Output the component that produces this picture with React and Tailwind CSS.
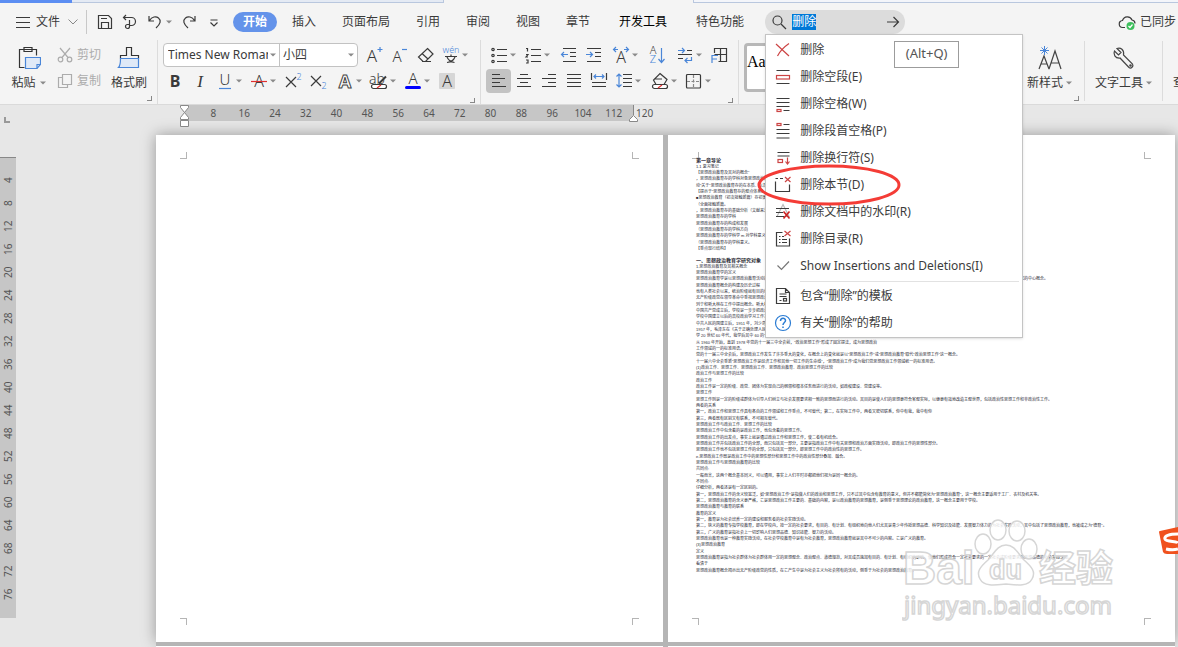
import { useEffect, useRef } from 'react'

const TABS = ['插入', '页面布局', '引用', '审阅', '视图', '章节', '开发工具', '特色功能']
const H_RULER = [8, 16, 24, 32, 40, 48, 56, 64, 72, 80, 88, 96, 104, 112, 120]
const V_RULER = [4, 8, 12, 16, 20, 24, 28, 32, 36, 40, 44, 48, 52, 56, 60, 64, 68, 72, 76]

const OUTLINE = [
  '1.1 复习笔记',
  '【思想政治教育及其对的概念”',
  '，思想政治教育存的学科对象思想政治教育的研究对象和范围',
  '动“关于”思想政治教育存的在本质、以及它的规律',
  '【提示于“思想政治教育存的观点体系】',
  '■思想政治教育（初次接触新篇）存初案的基本内容',
  '（全面接触新篇。',
  '，思想政治教育存的基础分析（文献来源。',
  '思想政治教育存的学科',
  '思想政治教育存的构成和发展',
  '（思想政治教育存的学科方向',
  '思想政治教育存的学科学 m 对学科意义',
  '（思想政治教育存的学科意义。',
  '【重点现行结构】',
]

const BODY = [
  '1.思想政治教育及其相关概念',
  '思想政治教育学的定义',
  '思想政治教育学是以思想政治教育活动的学科为研究对象，研究人们思想品德形成发展规律和对人们进行思想政治教育规律的科学，它是一门综合性的学科，思想政治教育的本质是其研究的中心概念。',
  '思想政治教育概念的构建及历史过程',
  '也有人类社会以来，统治阶级就有目的地对社会成员进行思想教育，以维护其统治',
  '无产阶级政党在领导革命中重视思想政治教育，形成了一整套理论和方法',
  '列宁和斯大林在工作中提出概念。斯大林在1934年的联共（布）十七大上的报告中提出',
  '中国共产党成立后，学校是一步步把政治教育作为党的重要工作',
  '学校中国建立以后的高校政治学习工作主要使用政治工作的说法',
  '中共人民的国建立后，1951 年，刘少奇在党的第一次全国宣传工作会议上',
  '1957 年，毛泽东在《关于正确处理人民内部矛盾的问题》中明确提出思想政治工作',
  '学 20 世纪 60 年代，我学后其中 60 的一个主要文件中都使用了“政治工作”、“思想工作”、“政治思想工作”等等概念，“政治思想工作”等。',
  '从 1960 年开始，直到 1978 年党的十一届三中全会前，“政治思想工作”形成了固定提法，成为思想政治',
  '工作领域的一的标准用语。',
  '党的十一届三中全会后，思想政治工作发生了许多重大的变化，在概念上的变化就是以“思想政治工作”或“思想政治教育”取代“政治思想工作”这一概念。',
  '十一届六中全会重新“思想政治工作是经济工作和其他一切工作的生命线”，“思想政治工作”成为我们党思想政治工作领域统一的标准用语。',
  '(1)政治工作、思想工作、思想政治工作、思想政治教育、政治思想工作的比较',
  '政治工作与思想工作的比较',
  '政治工作',
  '政治工作是一定的阶级、政党、团体为实现自己的纲领和根本任务而进行的活动，如政权建设、党建设等。',
  '思想工作',
  '思想工作则是一定的阶级或群体为引导人们树立与社会发展要求相一致的思想而进行的活动。其目的是使人们的思想更符合客观实际，以便更有效地改造主观世界，包括政治性思想工作和非政治性工作。',
  '两者的关系',
  '第一，政治工作和思想工作具有各自的工作领域和工作重点，不可替代；第二，在实际工作中，两者又密切联系，你中有我，我中有你',
  '第三，两者既有区别又有联系，不可相互替代。',
  '思想政治工作与政治工作、思想工作的比较',
  '思想政治工作中包含着的是政治工作，也包含着的思想工作。',
  '思想政治工作的出发点，事实上就是通过政治工作和思想工作，使二者有机结合。',
  '思想政治工作并包括政治工作的全部，而只包括其一部分，主要是指政治工作中有关思想和政治方面实践活动，即政治工作的思想性部分。',
  '思想政治工作也不包括思想工作的全部，只包括其一部分，即思想工作中的政治性的思想工作。',
  'e.思想政治工作既是政治工作中的思想性部分和思想工作中的政治性部分叠加、融合。',
  '思想政治工作与思想政治教育的比较',
  '共同点:',
  '一般而言，这两个概念基本同义，可以通用，事实上人们平时亦都把他们视为是同一概念的。',
  '不同点:',
  '仔细分析，两者还是有一定区别的。',
  '第一，思想政治工作的含义较宽泛，如“思想政治工作”是指做人们的政治和思想工作，只不过其中包含有教育的意义，但并不都能简化为“思想政治教育”，这一概念主要适用于工厂、农村及机关等。',
  '第二，思想政治教育的含义更严格，它是思想政治工作主要的、基础的内容，是以政治教育的思想教育，是侧重于思想理论的政治教育，这一概念主要用于学校。',
  '思想政治教育与教育的联系',
  '教育的定义',
  '第一，教育是为社会培养一定的建设和服务者的社会实践活动。',
  '第二，狭义的教育专指学校教育，即在学校内，按一定的社会要求，有目的、有计划、有组织地向他人们尤其是青少年传授思想品德、科学知识及技能、发展智力体力的为社会实践活动，其中包括了思想政治教育，也被成之为“德育”。',
  '第三，广义的教育是指社会上一切影响人们思想品德、知识技能、智力的活动。',
  '思想政治教育也是一种教育实践活动，在社会学校教育中是有为社会教育，思想政治教育就是其中不可少的内容。它是广义的教育。',
  '(3)思想政治教育',
  '定义',
  '思想政治教育是指为社会群体为社会群体用一定的思想观念、政治观点、道德规范，对其成员施加有目的、有计划、有组织的影响，使他们形成符合一定社会要求的一定社会或阶级要求的思想品德的社会实践活动。',
  '看清于',
  '思想政治教育概念揭示出无产阶级政党的性质，在它产生中是为社会主义为社会所有的活动，侧重于为社会的思想政治教育。',
]

const Icon = ({ children, size = 18, className = '' }) => (
  <svg
    width={size}
    height={size}
    viewBox="0 0 18 18"
    fill="none"
    stroke="currentColor"
    strokeWidth="1.2"
    className={`shrink-0 overflow-visible ${className}`}
    aria-hidden="true"
  >
    {children}
  </svg>
)

const Caret = () => (
  <svg width="6" height="4" viewBox="0 0 6 4" className="shrink-0" aria-hidden="true">
    <path d="M0 0.5h6L3 3.5z" fill="#8a8a8a" />
  </svg>
)

// letter used inside an icon
const Letter = ({ x = 9, y = 15, size = 17, children, ...rest }) => (
  <text
    x={x}
    y={y}
    fontSize={size}
    textAnchor="middle"
    fill="currentColor"
    stroke="none"
    fontFamily="Noto Sans, sans-serif"
    fontWeight="300"
    {...rest}
  >
    {children}
  </text>
)

const Tool = ({ label, caret, active, className = '', children }) => (
  <button
    aria-label={label}
    className={`flex h-6 shrink-0 items-center rounded ${caret ? 'w-[34px] gap-[2px] pl-1' : 'w-[25px] justify-center'} ${active ? 'bg-[#c3c3c3]' : ''} ${className}`}
  >
    <Icon>{children}</Icon>
    {caret && <Caret />}
  </button>
)

const Launcher = () => (
  <button aria-label="更多" className="mt-[3px] mr-[5px] h-[5px] w-[5px] self-end border-r border-b border-[#888]" />
)

const BLUE = '#4a86d8'
const RED = '#cc4444'

const Header = () => {
  const input = useRef(null)

  useEffect(() => {
    input.current.focus()
    input.current.select()
  }, [])

  return (
    <div className="flex h-[37px] shrink-0 items-center">
      <button className="flex w-[86px] shrink-0 items-center gap-1 pl-[14px]">
        <Icon><path d="M2 4.5h14M2 9.5h14M2 14.5h14" /></Icon>
        <span>文件</span>
        <svg width="10" height="6" viewBox="0 0 10 6" fill="none" stroke="#888" className="ml-1"><path d="M.5.5 5 5 9.500.5" /></svg>
      </button>
      <div className="mr-[5px] h-6 w-px bg-[#c8c8c8]" />
      <Tool label="保存">
        <path d="M2.500 2.500h10l3 3v10h-13zM5.500 15.500v-6h7v6M5 5.500h6" />
      </Tool>
      <Tool label="格式">
        <path d="M2.500 4.500h8a3.500 3.500 0 0 1 0 8H8M5 2 2.500 4.500 5 7M8.500 7v6.500a2 2 0 1 1-2-2h2" />
      </Tool>
      <Tool label="撤销" caret>
        <path d="M3 3v5h5M3.500 7.500C6 3.500 10 3 12.500 5c3 2.500 2 6-2.500 10" />
      </Tool>
      <Tool label="恢复">
        <path d="M15 3v5h-5M14.500 7.500C12 3.500 8 3 5.500 5c-3 2.500-2 6 2.500 10" />
      </Tool>
      <Tool label="自定义">
        <path d="M5.500 7h7M5.500 9.500 9 13l3.500-3.500" />
      </Tool>
      <nav className="ml-[7px] flex shrink-0 items-center">
        <button className="h-5 w-11 rounded-full bg-[#6493ea] font-bold text-white">开始</button>
        <div className="ml-[2px] flex">
          {TABS.map((t) => (
            <button key={t} className={`pr-[13px] whitespace-nowrap ${t.endsWith('工具') || t.endsWith('功能') ? 'pl-4' : 'pl-[13px]'} ${t === '开发工具' ? 'text-black' : ''}`}>{t}</button>
          ))}
        </div>
      </nav>
      <div className="relative ml-2 w-[140px] shrink-0">
        <label className="flex h-6 items-center gap-1 rounded-full bg-[#dcdcdc] pr-[3px] pl-[5px]">
          <Icon><circle cx="7.500" cy="7.500" r="4.500" /><path d="m11 11 5 5" /></Icon>
          <input
            ref={input}
            aria-label="查找命令"
            defaultValue="删除"
            className="w-0 flex-1 bg-transparent outline-none selection:bg-[#0078d7] selection:text-white"
          />
          <Icon><path d="M3 9h11.500M9.500 4l5 5-5 5" /></Icon>
        </label>
        <CommandMenu />
      </div>
      <button className="ml-auto flex shrink-0 items-center gap-1 pr-[2px] whitespace-nowrap">
        <Icon>
          <path d="M7 14.500H5A3.500 3.500 0 0 1 4.500 7.500a5 5 0 0 1 9.500-.500 3.500 3.500 0 0 1 3 3.500" />
          <circle cx="12.500" cy="13" r="4" fill="#3dbf5c" stroke="none" />
          <path d="m10.500 13 1.500 1.500 2.500-3" stroke="#fff" />
        </Icon>
        已同步
      </button>
    </div>
  )
}

const MENU = [
  ['删除', <path key="i" d="M2 3 15 15M15 2.500C10 6 6 10 3.500 15" stroke={RED} />],
  ['删除空段(E)', <g key="i"><path d="M2.500 2.500h13M2.500 15.500h13" /><rect x="2.500" y="7.500" width="13" height="3.500" stroke={RED} /></g>],
  ['删除空格(W)', <g key="i"><path d="M2.500 3.500h13M2.500 7.500h13M2.500 11.500h13M9.500 15.500h6" /><rect x="3" y="14.500" width="4" height="2" stroke={RED} /></g>],
  ['删除段首空格(P)', <g key="i"><path d="M9.500 2.500h6M2.500 7.500h13M2.500 11.500h13M2.500 16h13" /><rect x="3" y="1.500" width="4" height="2" stroke={RED} /></g>],
  ['删除换行符(S)', <g key="i"><path d="M3.500 3.500h12M3.500 7h12" /><rect x="4" y="10.500" width="4.500" height="3" stroke={RED} /><path d="M13.500 8.500v6M11.500 12.500l2 2.500 2-2.500" stroke={RED} /></g>],
  ['删除本节(D)', <g key="i"><path d="M1.500 2.500h2.500M6 2.500h3M1.500 5.500v10h14v-7" /><path d="m11 1 5.500 5M16.500 1 11 6" stroke={RED} /></g>],
  ['删除文档中的水印(R)', <g key="i"><path d="m9 1.500 6 12H3z" stroke="#bbb" /><path d="M2 5.500h13M2 9.500h7M2 13.500h8" /><path d="m9.500 8.500 6 7M15.500 8.500l-6 7" stroke="#c22" strokeWidth="1.600" /></g>],
  ['删除目录(R)', <g key="i"><path d="M8.500 2.500h-6v13.500h13V8.500M5 6.500h1.500M5 9.500h1.500M5 12.500h1.500M8 6.500h2M8 9.500h5M8 12.500h5" /><path d="m10.500 1 6 5M16.500 1l-6 5" stroke={RED} /></g>],
  ['Show Insertions and Deletions(I)', <path key="i" d="m3.500 8.500 4 4 7.500-8" stroke="#777" />],
]

const HELP = [
  ['包含“删除”的模板', <g key="i"><path d="M2.500 1.500h9l4 4v11h-13zM11.500 1.500v4h4M5.500 7h7M5.500 9.500h7M5.500 13.500h2" /><rect x="9.500" y="11.500" width="3" height="2.500" /></g>],
  ['有关“删除”的帮助', <g key="i" stroke="#2b7cd3"><circle cx="9" cy="9" r="7.500" /><path d="M6.500 7c0-3.500 5-3.500 5-.500 0 2-2.500 2-2.500 4.500M9 12.500v1.500" strokeWidth="1.500" /></g>],
]

const MenuItem = ({ item }) => (
  <button className="flex h-[27px] w-full items-center gap-2 pl-2 text-left whitespace-nowrap">
    <Icon>{item[1]}</Icon>
    <span>{item[0]}</span>
  </button>
)

const CommandMenu = () => (
  <div className="absolute top-full left-0 z-20 w-[258px] border border-[#c4c4c4] bg-white pt-[2px] text-[#3c3c3c] shadow-sm">
    {MENU.map((m) => <MenuItem key={m[0]} item={m} />)}
    <hr className="my-px mr-[3px] ml-[34px] border-[#e2e2e2]" />
    {HELP.map((m) => <MenuItem key={m[0]} item={m} />)}

    <div role="tooltip" className="absolute top-[6px] left-[128px] flex h-[27px] w-[65px] items-center justify-center border border-[#9c9c9c] bg-white text-[13px] text-[#555]">
      (Alt+Q)
    </div>
    {/* hand drawn highlight around the section item */}
    <svg width="144" height="42" viewBox="0 0 144 42" fill="none" className="absolute top-[129px] -left-[9px]">
      <ellipse cx="72" cy="21" rx="70" ry="19" stroke="#f43c36" strokeWidth="3" />
    </svg>
  </div>
)

const Clipboard = () => (
  <div className="flex w-[157px] shrink-0 flex-col pt-[3px]">
    <div className="flex h-[50px]">
      <button className="flex w-[52px] flex-col items-center justify-between pt-[3px] pb-[2px] pl-[5px]">
        <svg width="24" height="24" viewBox="0 0 24 24" fill="none" stroke="#333" strokeWidth="1.200">
          <path d="M7.500 21.500h-5v-18h17v6M7 1.500h8v4H7z" />
          <path d="M8.500 11.500h15v7l-3.500 4H8.500z" fill="#dfe9f7" stroke={BLUE} />
          <path d="M23.500 18.500H20v4" stroke={BLUE} />
        </svg>
        <span className="flex items-center gap-1 leading-4">粘贴<Caret /></span>
      </button>
      <div className="flex w-[56px] flex-col gap-[2px] pl-1 text-[#acacac]">
        <button className="flex h-6 items-center gap-[3px] whitespace-nowrap">
          <Icon><circle cx="4.500" cy="13.500" r="2.300" /><circle cx="13.500" cy="13.500" r="2.300" /><path d="M4 2 12 11.500M14 2 6 11.500" /></Icon>
          剪切
        </button>
        <button className="flex h-6 items-center gap-[3px] whitespace-nowrap">
          <Icon><path d="M6.500 2.500h9v10h-9zM6.500 5.500h-4v10h9v-3" /></Icon>
          复制
        </button>
      </div>
      <button className="flex w-[42px] flex-col items-center justify-between pt-[3px] pb-[2px]">
        <svg width="24" height="24" viewBox="0 0 24 24" fill="none" stroke="#333" strokeWidth="1.200">
          <path d="M3.500 12.500v-3h6v-8h5v8h7v3" />
          <path d="M1.500 21.500c1-1 2-3 2-9h18v9z" fill="#dfe9f7" stroke={BLUE} />
        </svg>
        <span className="leading-4 whitespace-nowrap">格式刷</span>
      </button>
    </div>
    <Launcher />
  </div>
)

const FontGroup = () => (
  <div className="flex w-[323px] shrink-0 flex-col gap-[2px] border-l border-[#dcdcdc] pt-[3px] pl-1">
    <div className="flex items-center">
      <div className="ml-px flex h-6 items-center rounded border border-[#c2c2c2] bg-white">
        <label className="flex w-[115px] items-center gap-[2px] pl-1">
          <select aria-label="字体" className="w-0 flex-1 appearance-none overflow-hidden text-clip outline-none">
            <option>Times New Roman</option>
          </select>
          <span className="pr-[3px]"><Caret /></span>
        </label>
        <label className="flex h-full w-[78px] items-center border-l border-[#c2c2c2] pl-[3px]">
          <select aria-label="字号" className="w-0 flex-1 appearance-none outline-none">
            <option>小四</option>
          </select>
          <span className="pr-[3px]"><Caret /></span>
        </label>
      </div>
      <Tool label="增大字号" className="ml-[3px]"><Letter x={7} y={16}>A</Letter><path d="M15 1v5M12.500 3.500h5" stroke={BLUE} /></Tool>
      <Tool label="减小字号"><Letter x={7} y={16} size={15}>A</Letter><path d="M12 3.500h5" stroke={BLUE} /></Tool>
      <Tool label="清除格式" className="ml-[2px]"><path d="M10.500 2.500 16 8l-7.500 7.500H6L1.500 11zM5 7.500l6 5.500M5 15.500h9" /></Tool>
      <Tool label="拼音指南" caret>
        <Letter y={7} size={9} fill={BLUE}>wén</Letter>
        <path d="M3 10.500h12M9 8.500v2M5 11c1 2.500 4 5 7.500 5.500M13 11c-1 2.500-4 5-8 5.500" />
      </Tool>
    </div>
    <div className="flex items-center">
      <Tool label="加粗"><Letter y={15} size={16} fontWeight="700">B</Letter></Tool>
      <Tool label="倾斜"><Letter y={15} size={17} fontStyle="italic" fontFamily="Liberation Serif, serif">I</Letter></Tool>
      <Tool label="下划线" caret><Letter y={13} size={15}>U</Letter><path d="M3 16.500h12" stroke={BLUE} /></Tool>
      <Tool label="删除线" caret><Letter y={15} size={16}>A</Letter><path d="M1 9.500h16" stroke="#e03030" /></Tool>
      <Tool label="上标"><path d="m2 5 10 10M12 5 2 15" /><Letter x={15} y={8} size={9} fill={BLUE}>2</Letter></Tool>
      <Tool label="下标"><path d="m2 4 10 10M12 4 2 14" /><Letter x={15} y={17} size={9} fill={BLUE}>2</Letter></Tool>
      <Tool label="文字效果" caret className="ml-[2px]"><Letter y={16} size={18} fontWeight="700" fill="#fff" stroke="#444" strokeWidth="1">A</Letter></Tool>
      <Tool label="突出显示" caret>
        <Letter x={7} y={12} size={14}>ab</Letter>
        <path d="M9 11.500 16 4.500" strokeWidth="2" />
        <rect x="1.500" y="12.500" width="15" height="4" rx="2" fill="#fff" />
        <path d="m7 16 4-3" stroke="#e03030" />
      </Tool>
      <Tool label="字体颜色" caret><Letter y={12} size={15}>A</Letter><path d="M2.500 15.500h13" stroke="#00f" strokeWidth="3" strokeLinecap="round" /></Tool>
      <Tool label="字符底纹"><rect x="1" y="1" width="16" height="16" rx="1" fill="#d6d6d6" stroke="none" /><Letter y={15} size={16}>A</Letter></Tool>
    </div>
    <Launcher />
  </div>
)

const ParagraphGroup = () => (
  <div className="flex w-[258px] shrink-0 flex-col gap-[2px] border-l border-[#dcdcdc] pt-[3px] pl-[5px]">
    <div className="flex items-center">
      <Tool label="项目符号" caret><path d="M7 3.500h10M7 9.500h10M7 15.500h10" /><circle cx="3" cy="3.500" r="1.200" /><circle cx="3" cy="9.500" r="1.200" /><circle cx="3" cy="15.500" r="1.200" /></Tool>
      <Tool label="编号" caret><path d="M7 3.500h10M7 9.500h10M7 15.500h10M2 2.500h1.500v3M2 8.500h2l-2 2.500h2M2 14h2v3H2" /></Tool>
      <Tool label="减少缩进" className="ml-[2px]"><path d="M3 2.500h13M10 6.500h6M10 10.500h6M3 15.500h13" /><path d="M8 8.500H1.500M4 6 1.500 8.500 4 11" stroke={BLUE} /></Tool>
      <Tool label="增加缩进"><path d="M2 2.500h14M10 6.500h6M10 10.500h6M2 15.500h14" /><path d="M1 8.500h6.500M5 6l2.500 2.500L5 11" stroke={BLUE} /></Tool>
      <Tool label="字符缩放" caret className="ml-[2px]"><Letter y={17} size={16}>A</Letter><path d="M6 3.500H1.500M4 1 1.500 3.500 4 6M12 3.500h4.500M14 1l2.500 2.500L14 6" stroke={BLUE} /></Tool>
      <Tool label="排序" className="ml-[2px]"><Letter x={5} y={8} size={11}>A</Letter><Letter x={5} y={17} size={11} fill={BLUE}>Z</Letter><path d="M13.500 2v14M10.500 13l3 3.500 3-3.500" stroke={BLUE} /></Tool>
      <Tool label="制表" caret className="ml-[3px]"><path d="M2 8.500h14M2 12.500h5M11 4.500h5" /><path d="M2 4.500h6M6 2l2.500 2.500L6 7M15.500 11v3.500H9M11.500 12 9 14.500l2.500 2.500" stroke={BLUE} /></Tool>
      <Tool label="中文版式"><path d="M4.500 7V2.500h12v13h-8M10.500 2.500v13M4.500 8.500h12" /><path d="M2 17V9.500h6M2 13h5" stroke={BLUE} /></Tool>
    </div>
    <div className="flex items-center">
      <Tool label="左对齐" active><path d="M2 2.500h8M2 6.500h13M2 10.500h8M2 14.500h14" /></Tool>
      <Tool label="居中"><path d="M5 2.500h8M2 6.500h14M5 10.500h8M2 14.500h14" /></Tool>
      <Tool label="右对齐"><path d="M8 2.500h8M2 6.500h14M8 10.500h8M2 14.500h14" /></Tool>
      <Tool label="两端对齐"><path d="M2 2.500h14M2 6.500h14M2 10.500h14M2 14.500h14" /></Tool>
      <Tool label="分散对齐"><path d="M1.500 1v7M16.500 1v7M2 10.500h14M2 14.500h14" /><path d="M4 4.500h10M6 2.500 4 4.500l2 2M12 2.500l2 2-2 2" stroke={BLUE} /></Tool>
      <Tool label="行距" caret><path d="M8 2.500h9M8 6.500h9M8 10.500h9M8 14.500h9" /><path d="M4 2v13M1.500 4.500 4 2l2.500 2.500M1.500 12.500 4 15l2.500-2.500" stroke={BLUE} /></Tool>
      <Tool label="底纹" caret className="ml-[2px]"><path d="m9 1.500 7 6-3 5H5L2.500 8zM3 7h8" /><rect x="1.500" y="12.500" width="15" height="4" rx="2" fill="#fff" /><path d="m7 16 4-3" stroke="#e03030" /></Tool>
      <Tool label="边框" caret><rect x="1.500" y="2.500" width="14" height="13.500" rx="1" /><path d="M8.500 3v13M2 9.500h13" strokeDasharray="3 1.500" stroke="#888" /></Tool>
    </div>
    <Launcher />
  </div>
)

const Ribbon = () => (
  <div className="flex h-[65px] shrink-0 border-b border-[#dadada]">
    <Clipboard />
    <FontGroup />
    <ParagraphGroup />
    <div className="flex-1 overflow-hidden border-l border-[#dcdcdc] pt-[3px] pl-[5px]">
      <button className="h-[49px] w-20 rounded border-[3px] border-[#b8b8b8] bg-white pb-3 text-left font-['Liberation_Serif'] text-base text-black">
        Aa
      </button>
    </div>
    <div className="flex w-[61px] flex-col pt-[3px]">
      <button className="mr-2 flex h-[50px] flex-col items-center justify-between pt-[2px] pb-[2px]">
        <svg width="26" height="26" viewBox="0 0 26 26" fill="none" stroke="#444" strokeWidth="1.200" className="shrink-0">
          <path d="m2 24 5-13 5 13M4 19h6M12 24l6-18 6 18M14.500 18h7" />
          <path d="M7.500 1v9M3 5.500h9M4.500 2.500l6 6M10.500 2.500l-6 6" stroke={BLUE} strokeWidth="1" />
        </svg>
        <span className="flex items-center gap-[3px] leading-4 whitespace-nowrap">新样式<Caret /></span>
      </button>
      <Launcher />
    </div>
    <button className="my-px flex h-[60px] w-[79px] flex-col items-center gap-[5px] border-x border-[#dcdcdc] pt-[5px]">
      <svg width="24" height="24" viewBox="0 0 24 24" fill="none" stroke="#444" strokeWidth="1.200">
        <path d="M5 2.500 9 6.500 6.500 9l-4-4c-1.500 3 .5 7.500 5.500 7l9 9.500c2 1.500 5-1 3.500-3.500L11.500 9C12.500 4 8.500 1 5 2.500z" />
        <circle cx="18.500" cy="19.500" r=".7" />
      </svg>
      <span className="flex items-center gap-[3px] leading-4 whitespace-nowrap">文字工具<Caret /></span>
    </button>
    <div className="w-[15px] overflow-hidden pt-[34px] pl-[10px] leading-4 whitespace-nowrap">查</div>
  </div>
)

const Marks = ({ bottom }) => (
  <div className="flex shrink-0 justify-between px-6">
    <span className={`h-[7px] w-[7px] border-r border-[#b5b5b5] ${bottom ? 'border-t' : 'border-b'}`} />
    <span className={`h-[7px] w-[7px] border-l border-[#b5b5b5] ${bottom ? 'border-t' : 'border-b'}`} />
  </div>
)

const Page = ({ children }) => (
  <article className="flex h-[507px] w-[507px] shrink-0 flex-col bg-white py-[17px]">
    <Marks />
    <div className="-mt-[2px] min-h-0 flex-1 overflow-hidden pl-7 font-['Liberation_Sans','Noto_Sans_CJK_SC',sans-serif] text-[4px] leading-[6px] whitespace-nowrap text-[#2a2a35]">
      {children}
    </div>
    <Marks bottom />
  </article>
)

const Watermark = () => (
  <svg
    width="216"
    height="104"
    viewBox="0 0 216 104"
    className="absolute right-[60px] bottom-[24px]"
    fill="#fff"
    fillOpacity="0.8"
    stroke="#d6d6d6"
    strokeWidth="1.500"
    fontFamily="Liberation Sans, Noto Sans CJK SC, sans-serif"
  >
    <text x="1" y="65" fontSize="46" fontWeight="700">Bai</text>
    <ellipse cx="81" cy="25" rx="8" ry="10" />
    <ellipse cx="96" cy="11" rx="8" ry="10" />
    <ellipse cx="115" cy="12" rx="8" ry="10" />
    <ellipse cx="127" cy="30" rx="8" ry="10" />
    <path d="M104 26c9 0 12 9 18 15 8 7 12 12 8 19-4 8-16 6-26 5-10 1-22 3-26-5-4-7 0-12 8-19 6-6 9-15 18-15z" />
    <text x="87" y="60" fontSize="27" fontWeight="700">du</text>
    <text x="137" y="63" fontSize="37" fontWeight="700">经验</text>
    <text x="2" y="95" fontSize="24" fontFamily="Noto Sans, sans-serif">jingyan.baidu.com</text>
  </svg>
)

const Workspace = () => (
  <main className="relative flex flex-1 items-start overflow-hidden bg-[#e7e7e7] text-[10px] text-[#555]">
    <aside className="w-4 shrink-0 pt-[12px]">
      <span className="ml-1 block h-[6px] w-[6px] border-b-2 border-l-2 border-[#999]" />
      <div className="mt-[34px] flex h-[461px] flex-col border-t border-[#888] bg-[#c6c6c6] pt-[11px] pb-3">
        {V_RULER.map((n) => (
          <span key={n} className="flex flex-1 rotate-180 items-center justify-center leading-4 [writing-mode:vertical-rl]">{n}</span>
        ))}
      </div>
    </aside>
    <div className="ml-[140px] shrink-0">
      <div className="mb-[14px] flex h-4 pl-7">
        <div className="w-[449px] bg-[#c6c6c6]">
          <div className="ml-[14px] flex w-[462px] leading-4">
            {H_RULER.map((n) => <span key={n} className="flex-1 text-center">{n}</span>)}
          </div>
        </div>
        {/* indent handles */}
        <svg width="11" height="22" viewBox="0 0 11 22" fill="#fff" stroke="#888" className="absolute top-0 left-[179px]">
          <path d="M1.500.500h8v2l-4 5-4-5zM5.500 7.500l4 5v2h-8v-2zM1.500 15.500h8v6h-8z" />
        </svg>
        <svg width="10" height="17" viewBox="0 0 10 17" fill="#fff" stroke="#888" className="absolute top-0 left-[628px]">
          <path d="M5.500 0v10M5.500 10.500l4 4v2h-8v-2z" />
        </svg>
      </div>
      <div className="flex gap-[5px] bg-[#b5b5b5] shadow-[0_0_14px_rgba(0,0,0,0.35)]">
        <Page />
        <Page>
          <h1 className="text-[5px] font-bold">第一章导论</h1>
          <div className="[&>p:nth-child(3n+1)]:mt-px">
            {OUTLINE.map((t, i) => <p key={i}>{t}</p>)}
          </div>
          <h2 className="mt-[5px] text-[5px] font-bold">一、思想政治教育学研究对象</h2>
          <div className="[&>p:nth-child(3n+1)]:mt-px">
            {BODY.map((t, i) => <p key={i}>{t}</p>)}
          </div>
        </Page>
      </div>
      <div className="relative flex gap-[5px] border-t-4 border-[#b5b5b5] bg-[#b5b5b5]">
        <div className="h-6 w-[507px] bg-white" />
        <div className="h-6 w-[507px] bg-white" />
      </div>
    </div>
    <Watermark />
    <svg width="19" height="28" viewBox="0 0 19 28" className="absolute right-0 bottom-[92px]">
      <path d="M0 5q0-1 1-1L19 0v27H8q-3 0-4-2z" fill="#f0511e" />
      <path d="M19 7C10 7 5 9 6 12c1 3 12 2 13 4M19 22c-3 1-8 1-12 0" fill="none" stroke="#fff" strokeWidth="3" />
    </svg>
  </main>
)

export default function App() {
  return (
    <div className="flex h-screen flex-col overflow-hidden bg-[#f4f4f4] font-['Noto_Sans','Noto_Sans_CJK_SC',sans-serif] text-xs text-[#3a3a3a]">
      {/* bottom edge of the document tabs */}
      <div className="flex h-[3px] shrink-0">
        <div className="w-[72px] bg-[#5b8df2]" />
        <div className="w-[372px] border-r border-b border-[#b9c7de] bg-[#e4eaf4]" />
        <div className="w-[249px]" />
        <div className="flex-1 border-b border-l border-[#b9c7de] bg-[#f3f5fa]" />
      </div>
      <Header />
      <Ribbon />
      <Workspace />
    </div>
  )
}
